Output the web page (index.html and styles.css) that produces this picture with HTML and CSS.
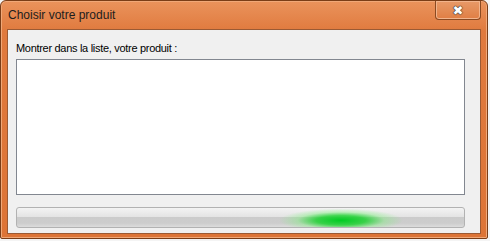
FILE: index.html
```html
<!DOCTYPE html>
<html>
<head>
<meta charset="utf-8">
<link rel="stylesheet" href="styles.css">
</head>
<body>
<div class="window">
  <div class="titlebar">
    <span class="title">Choisir votre produit</span>
    <div class="close"><span class="x">&#x2716;</span></div>
  </div>
  <div class="client">
    <div class="label">Montrer dans la liste, votre produit :</div>
    <div class="listbox"></div>
    <div class="progress"><div class="glow"></div></div>
  </div>
</div>
</body>
</html>
```
FILE: styles.css
```css
html, body { margin: 0; padding: 0; background: #f4f4f4; }
body { width: 490px; height: 241px; overflow: hidden; }
.window {
  width: 488px;
  height: 239px;
  border: 1px solid #7a3d17;
  border-radius: 6px 6px 2px 2px;
  background: linear-gradient(to bottom, #ea935c 0px, #e07a3e 30px, #dd7436 100%);
  box-shadow: inset 0 0 0 1px #f0a878;
  display: flex;
  flex-direction: column;
  padding: 0 6px 5px 6px;
  box-sizing: border-box;
}
.titlebar {
  height: 28px;
  display: flex;
  align-items: flex-start;
  flex-shrink: 0;
}
.title {
  font-family: "Liberation Sans", Arial, sans-serif;
  font-size: 12px;
  color: #1d1d1d;
  margin-top: 7px;
  margin-left: 1px;
}
.close {
  margin-left: auto;
  margin-right: 0;
  width: 46px;
  height: 19px;
  box-sizing: border-box;
  border: 1px solid #8a4a22;
  border-top: none;
  border-radius: 0 0 4px 4px;
  background: linear-gradient(to bottom, #e89a68, #e07e44);
  box-shadow: inset 0 0 0 1px #f2b48c;
  display: flex;
  align-items: center;
  justify-content: center;
}
.x {
  font-family: "DejaVu Sans", sans-serif;
  font-size: 13px;
  font-weight: bold;
  line-height: 1;
  color: #ffffff;
  text-shadow: 0 0 1px #2a2a2a, 0 0 1px #2a2a2a, 0 0 1px #2a2a2a;
}
.client {
  flex: 1;
  background: #f0f0f0;
  border: 1px solid #9b5a34;
  display: flex;
  flex-direction: column;
  padding: 0 15px 5px 8px;
}
.label {
  font-family: "Liberation Sans", Arial, sans-serif;
  font-size: 11px;
  letter-spacing: -0.3px;
  color: #000;
  margin-top: 11px;
  height: 18px;
  line-height: 14px;
}
.listbox {
  height: 136px;
  background: #fff;
  border: 1px solid #828790;
  box-sizing: border-box;
}
.progress {
  margin-top: 12px;
  height: 21px;
  box-sizing: border-box;
  border: 1px solid #b2b2b2;
  border-radius: 3px;
  background: linear-gradient(to bottom, #f3f3f3 0%, #e4e4e4 45%, #cbcbcb 50%, #cdcdcd 80%, #dcdcdc 100%);
  position: relative;
  overflow: hidden;
}
.glow {
  position: absolute;
  left: 262px;
  top: 0;
  width: 124px;
  height: 19px;
  background: radial-gradient(ellipse 50% 62% at 50% 65%, #00cc22 0%, rgba(20,210,40,0.8) 40%, rgba(120,240,120,0.4) 70%, rgba(200,255,200,0) 100%);
}
```
